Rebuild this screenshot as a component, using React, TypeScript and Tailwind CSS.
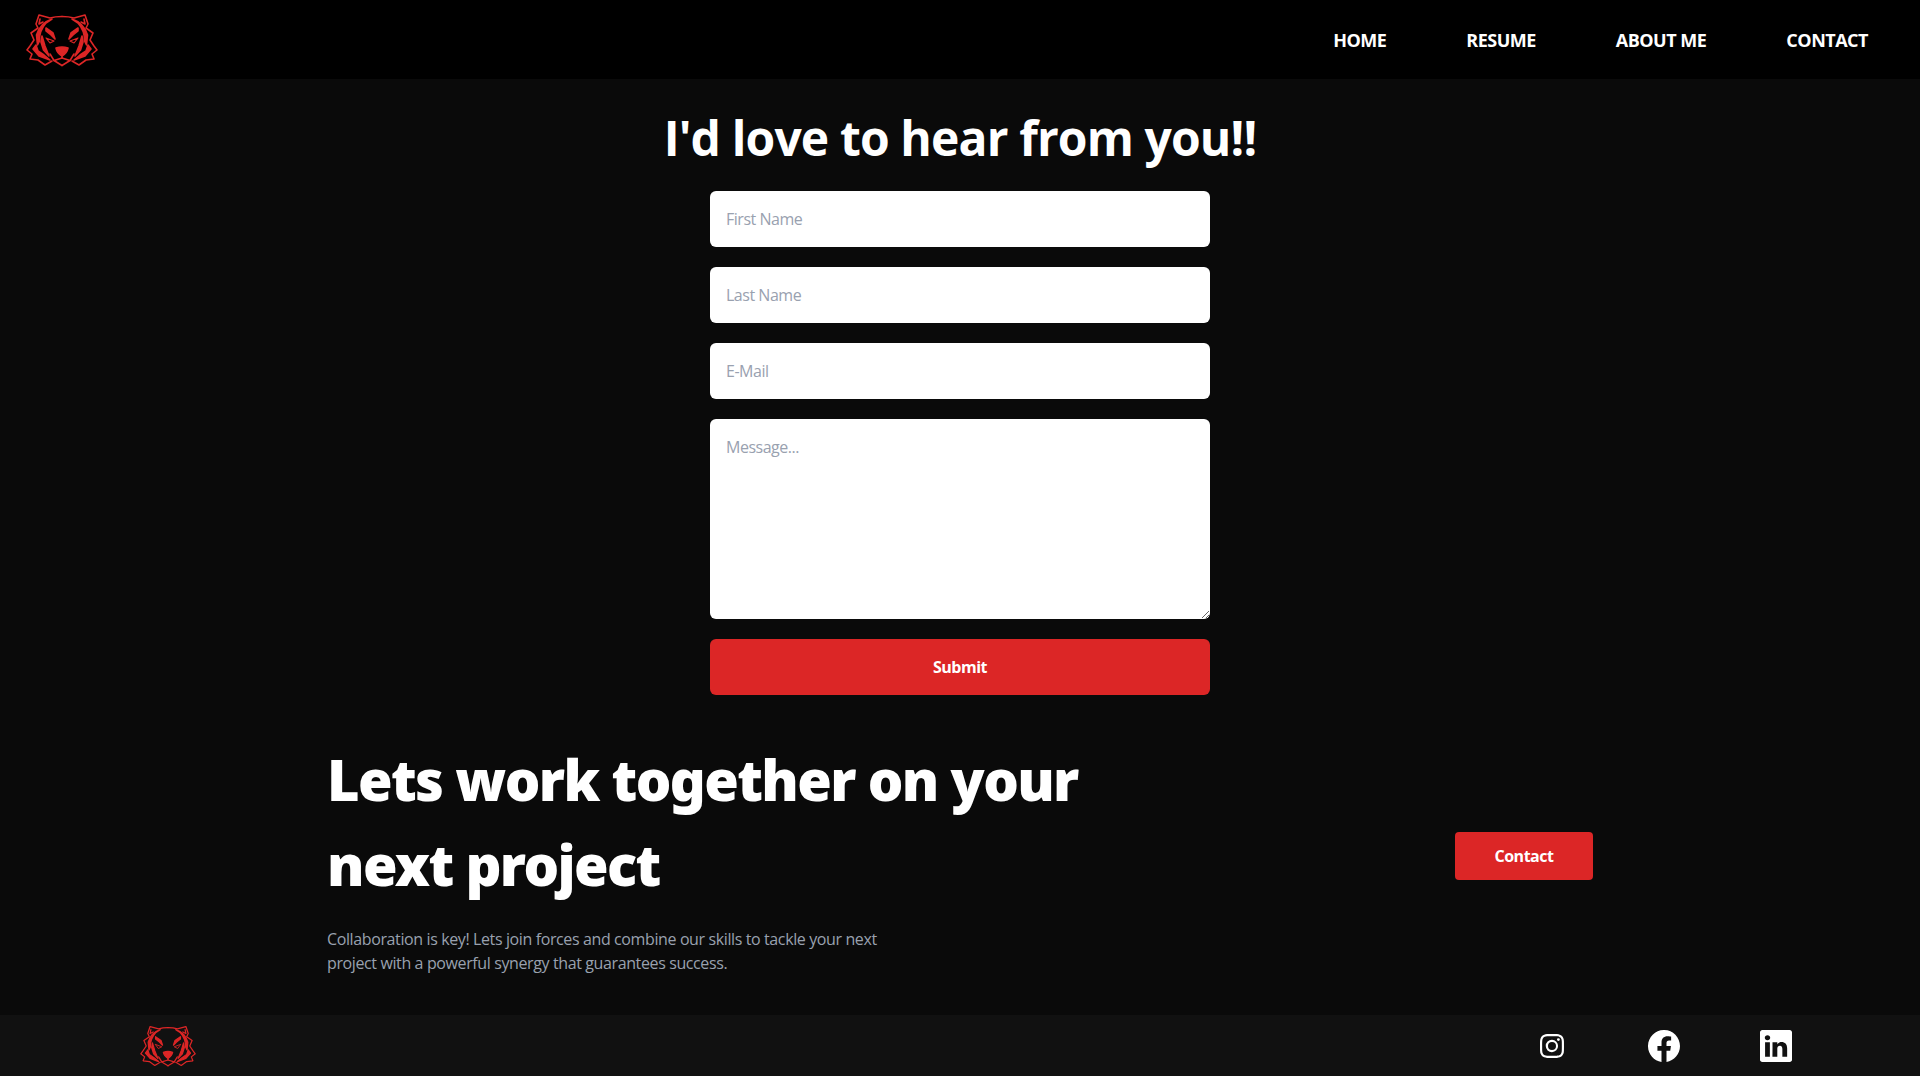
import { BsFacebook, BsInstagram, BsLinkedin } from 'react-icons/bs';

const TigerHalf = () => (
    <>
        {/* outer fur and ear */}
        <path d="M36 3.5 Q29 3.5 24 5 L13 2 L10 11 L12 15 L5 20 L8 27 L4 33 L1 37 L6 41 L4 46 L12 47 L19 52 L26 48" />
        <path d="M14 6 L13 11 L17 9" />
        {/* cheek stripes */}
        <path d="M26 6 Q14 10 10.5 22 L11.5 32 L13.5 28 Q13 18 20 10 Z" fill="#dc2626" />
        <path d="M16 23 L15 29 L17.5 37 L23 43 L19 33 Z" fill="#dc2626" />
        <path d="M7 36 L13 43 L24 47 L18 42 L12 38 L10 32 Z" fill="#dc2626" />
        {/* brow and eye */}
        <path d="M20 15 L27 20 L29 26 L25 22 L20 18 Z" fill="#dc2626" />
        <path d="M20 25 L28 28 L24 30 Z" strokeWidth="1.1" />
        {/* muzzle */}
        <path d="M36 45 L28 47.5 L36 52.5" />
        <path d="M24 41 L28 47.5" />
    </>
);

const TigerLogo = ({ className }: { className: string }) => (
    <svg viewBox="0 0 72 54" className={className} fill="none" stroke="#dc2626" strokeWidth="1.6" strokeLinejoin="round" strokeLinecap="round">
        <TigerHalf />
        <g transform="translate(72,0) scale(-1,1)">
            <TigerHalf />
        </g>
        <path d="M30 35 Q36 33 42 35 Q41 40 36 43 Q31 40 30 35 Z" fill="#dc2626" />
        <path d="M36 43 L36 45" />
    </svg>
);

const fieldClass = 'w-full h-14 bg-white rounded-md px-4 text-base text-gray-900 placeholder:text-gray-400 outline-none';

export default function App() {
    return (
        <div className="min-h-[1076px] flex flex-col bg-[#0a0a0a] text-white font-['Open_Sans',sans-serif]">
            <nav className="h-[79px] bg-black flex items-center justify-between pl-[26px] pr-[52px]">
                <TigerLogo className="w-[72px] h-[54px]" />
                <ul className="flex gap-[80px] text-lg font-bold tracking-[-0.028em]">
                    <li>HOME</li>
                    <li>RESUME</li>
                    <li>ABOUT ME</li>
                    <li>CONTACT</li>
                </ul>
            </nav>

            <main className="flex-1 flex flex-col">
                <section className="flex flex-col items-center pt-[27px]">
                    <h1 className="text-5xl font-bold leading-[64px] tracking-[-0.018em] mb-[21px]">I'd love to hear from you!!</h1>
                    <form className="w-[500px] flex flex-col gap-5 tracking-[-0.03em]">
                        <input className={fieldClass} placeholder="First Name" />
                        <input className={fieldClass} placeholder="Last Name" />
                        <input className={fieldClass} placeholder="E-Mail" />
                        <textarea className="w-full h-[200px] bg-white rounded-md px-4 py-4 text-base text-gray-900 placeholder:text-gray-400 outline-none block" placeholder="Message..." />
                        <button type="button" className="w-full h-14 bg-[#dc2626] rounded-md font-bold text-base">Submit</button>
                    </form>
                </section>

                <section className="flex items-center justify-between px-[327px] mt-[42px] pb-[7px]">
                    <div>
                        <h2 className="w-[800px] font-['Noto_Sans',sans-serif] text-[56px] font-black leading-[85px] tracking-[-0.029em]">Lets work together on your next project</h2>
                        <p className="w-[576px] mt-5 text-base leading-6 text-gray-400 tracking-[-0.024em]">Collaboration is key! Lets join forces and combine our skills to tackle your next project with a powerful synergy that guarantees success.</p>
                    </div>
                    <button type="button" className="w-[138px] h-12 bg-[#dc2626] rounded font-bold text-base tracking-[-0.03em]">Contact</button>
                </section>
            </main>

            <footer className="h-[61px] bg-[#111111] flex items-center justify-between pl-[140px] pr-[128px]">
                <TigerLogo className="w-[56px] h-[42px]" />
                <div className="flex items-center gap-20">
                    <BsInstagram size={24} className="mx-1" />
                    <BsFacebook size={32} />
                    <BsLinkedin size={32} />
                </div>
            </footer>
        </div>
    );
}
